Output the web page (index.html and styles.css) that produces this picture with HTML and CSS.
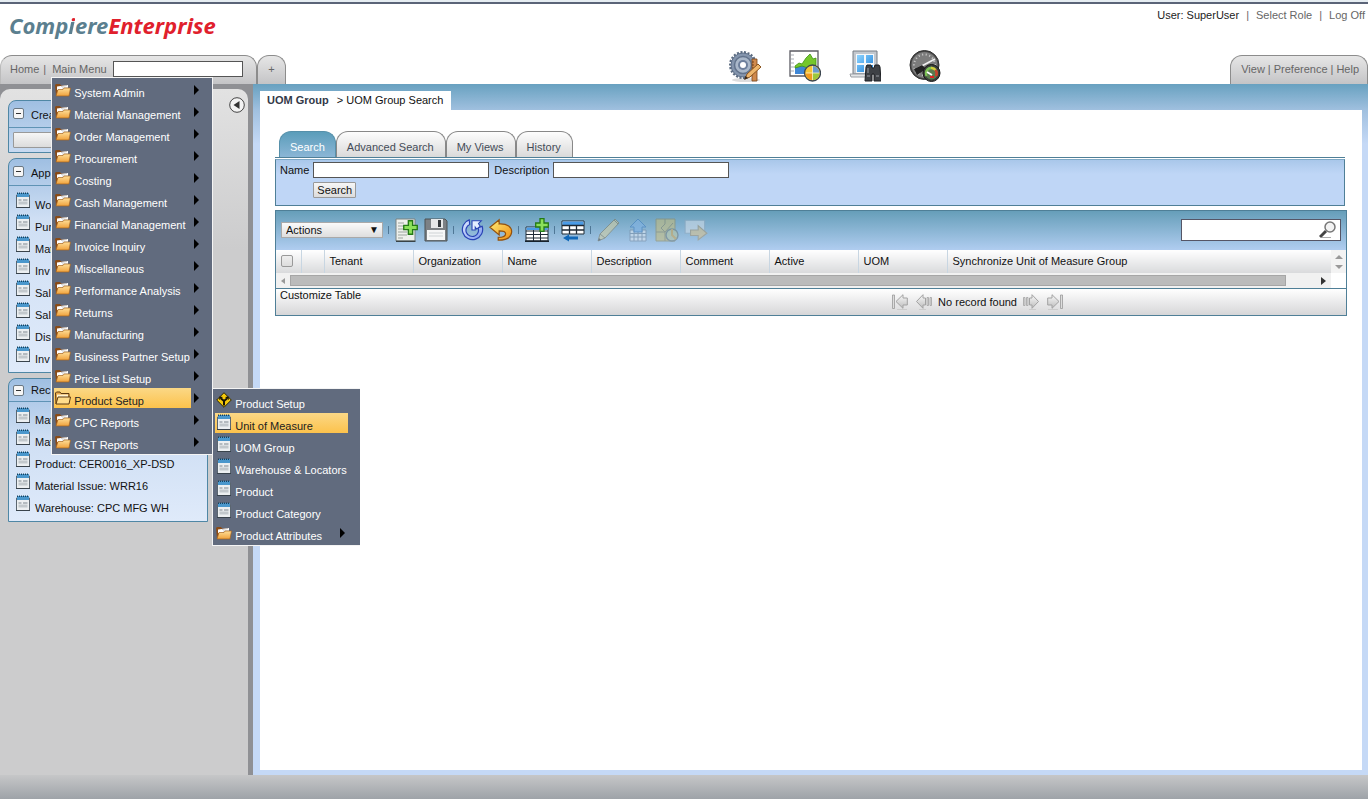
FILE: index.html
```html
<!DOCTYPE html>
<html lang="en">
<head>
<meta charset="utf-8">
<title>Compiere Enterprise - UOM Group</title>
<link rel="stylesheet" href="styles.css">
</head>
<body>
<svg class="defs" aria-hidden="true">
  <defs>
    <linearGradient id="gold" x1="0" y1="0" x2="0" y2="1"><stop offset="0" stop-color="#ffdf98"/><stop offset="1" stop-color="#f0a23c"/></linearGradient>
    <linearGradient id="amber" x1="0" y1="0" x2="1" y2="1"><stop offset="0" stop-color="#fff07a"/><stop offset="1" stop-color="#f08c10"/></linearGradient>
    <linearGradient id="blue" x1="0" y1="0" x2="1" y2="1"><stop offset="0" stop-color="#e2ecff"/><stop offset="1" stop-color="#7c98ee"/></linearGradient>
    <linearGradient id="silver" x1="0" y1="0" x2="0" y2="1"><stop offset="0" stop-color="#fafafa"/><stop offset="1" stop-color="#bcbcbc"/></linearGradient>
    <linearGradient id="pane" x1="0" y1="0" x2="1" y2="1"><stop offset="0" stop-color="#8fd4ff"/><stop offset="1" stop-color="#1d80d8"/></linearGradient>
    <symbol id="folder" viewBox="0 0 16 14">
      <path d="M1 12.500L0 2l1-1h4l1 1.500h7V6l-9 1-2 5.500z" fill="#8a4b16"/><path d="M2 6.500V3.500L13 2v5H2z" fill="#fff"/><path d="M6 3.500l6-1M7 5h6" stroke="#b5b5b5" stroke-width=".7"/>
      <path d="M1 13L3 6.500h5L9 5h6.500L14 13z" fill="url(#gold)" stroke="#a8641c" stroke-width=".7"/>
    </symbol>
    <symbol id="folder-open" viewBox="0 0 16 14">
      <path d="M1 13L.5 2l1-1H5l1 1.500h8V6" fill="#e9a94c" stroke="#5c3a12"/><path d="M2 3.500h11V7H2z" fill="#fff3cf"/><path d="M1 13L3 6h12.500L14 13z" fill="#ffdd8c" stroke="#5c3a12"/>
    </symbol>
    <symbol id="window" viewBox="0 0 14 16">
      <path d="M.5 3h13v12.500H.5z" fill="#eceff1" stroke="#5b6670"/><path d="M1 1h12v4H1z" fill="#4a97cc"/><path d="M1 1.200h12" stroke="#17425f" stroke-width="1.600" stroke-dasharray="1 1"/>
      <path d="M2.500 8h3M7 8h4.500" stroke="#7c868e"/><path d="M2.500 9.500h9v3h-9z" fill="#c2c8cc"/><path d="M0 15.500h14" stroke="#39434c"/>
    </symbol>
    <symbol id="sign" viewBox="0 0 16 16">
      <path d="M8 .7L15.300 8 8 15.300.7 8z" fill="#f5c90a" stroke="#2c2505"/><path d="M8 13.500V9L5 6.500M8 9l3-2.500" stroke="#151206" stroke-width="2" fill="none"/><path d="M3 8l.5-3.500L7 5zM13 8l-.5-3.500L9 5z" fill="#151206"/>
    </symbol>
    <symbol id="gear" viewBox="0 0 32 32">
      <ellipse cx="17" cy="30" rx="14" ry="2" fill="#ddd"/><circle cx="14" cy="15" r="12.500" fill="none" stroke="#5b6b80" stroke-width="3" stroke-dasharray="2 1.500"/><circle cx="14" cy="15" r="12" fill="#8495ad" stroke="#5f7089"/>
      <circle cx="14" cy="15" r="8.500" fill="#a9b7c9" stroke="#62738c" stroke-width="1.500"/><circle cx="14" cy="15" r="5" fill="#6d7f9c"/><circle cx="14" cy="15" r="3" fill="#fff"/>
      <path d="M23 9h5v22h-5z" fill="#d08a4d" stroke="#7a441b" stroke-width=".8"/><path d="M23 12h2M23 15h2M23 18h2M23 21h2" stroke="#5c3011" stroke-width=".8"/>
      <path d="M16 29l2-5 11-10 3 3-11 10z" fill="#eeb66c" stroke="#8a5420"/><path d="M15 30l1.500-4 2.500 2z" fill="#3a2a1c"/>
    </symbol>
    <symbol id="report" viewBox="0 0 32 32">
      <path d="M1 1h28v25H1z" fill="#fff" stroke="#5b5b63" stroke-width="1.300"/><path d="M2 5h3M2 9h3M2 13h3M2 17h3M2 21h3" stroke="#a6abb4"/>
      <path d="M6 24v-7l7-3 6 1 8-4v13z" fill="#3e86d6"/><path d="M6 16l4-3 3 1 4-6 4-4 3 5 3-1v7l-8 3-6-2-7 2z" fill="#75c72c" stroke="#3f9213" stroke-width=".8"/>
      <circle cx="23.500" cy="23" r="8" fill="#f5c536" stroke="#3c4650" stroke-width="1.300"/><path d="M23.500 23v-7a7 7 0 0 1 7 7z" fill="#6a9bce"/><path d="M23.500 23h7a7 7 0 0 1-7 7z" fill="#9cc83c"/><path d="M23.500 23v7a7 7 0 0 1-7-7z" fill="#f09a1e"/><path d="M23.500 16v14M17 23h13" stroke="#fff3c8" stroke-width=".8"/>
    </symbol>
    <symbol id="finder" viewBox="0 0 32 32">
      <path d="M4 1h24v23H4z" fill="#c3c8ce" stroke="#777d84"/><path d="M7 4h18v19H7z" fill="#f5f8fa"/><path d="M8 5h7v8H8zM17 5h7v8h-7zM8 15h7v7H8zM17 15h7v7h-7z" fill="url(#pane)"/><path d="M1 24h22l-1 3H2z" fill="#e3e5e7" stroke="#999ea4"/>
      <path d="M17 17l1-2h4l1 3h2l1-3h4l1 2 1 14h-7v-7h-2v7h-7z" fill="#3e4146" stroke="#1d1f22"/><path d="M18 26h3M27 26h3M19 18v5" stroke="#9a9ea4"/>
    </symbol>
    <symbol id="gauge" viewBox="0 0 32 32">
      <circle cx="15.500" cy="15" r="14.500" fill="#484848" stroke="#333"/><circle cx="15.500" cy="15" r="13" fill="#7c7c7c"/><circle cx="15.500" cy="15" r="10.500" fill="none" stroke="#ccc" stroke-width="2" stroke-dasharray="1 2.600"/><path d="M7 19L26 9" stroke="#f1f1f1" stroke-width="1.600"/><path d="M5 19l8-4 4 4-9 6z" fill="#222"/>
      <circle cx="22.500" cy="23" r="8.500" fill="#3a3f3a" stroke="#181818"/><circle cx="22.500" cy="23" r="6.500" fill="#5a7a4e"/><path d="M17.500 26a5.500 5.500 0 0 1 4.500-8" fill="none" stroke="#7cc455" stroke-width="2.500"/><path d="M22 18a5 5 0 0 1 4.500 2" fill="none" stroke="#d4cf3a" stroke-width="2.500"/><path d="M26.500 20a5.500 5.500 0 0 1 .5 6" fill="none" stroke="#c7422c" stroke-width="2.500"/><path d="M18 22l5 3" stroke="#fff" stroke-width="2"/><path d="M21 26h4v2h-4z" fill="#d22"/>
    </symbol>
    <symbol id="plus" viewBox="0 0 14 14"><path d="M5 .7h4V5h4.300v4H9v4.300H5V9H.7V5H5z" fill="#8be05a" stroke="#247a16" stroke-width="1.300"/></symbol>
    <symbol id="doc-new" viewBox="0 0 24 24"><path d="M1 1h19v22H1z" fill="#eef0ec" stroke="#7b8382"/><path d="M3 5h6M3 8h5M3 11h6M3 14h9M3 17h9M3 20h5" stroke="#9ca49f"/><path d="M1 23.300h19.500" stroke="#384246" stroke-width="1.400"/><use href="#plus" x="8" y="2" width="15" height="15"/></symbol>
    <symbol id="save" viewBox="0 0 24 24"><path d="M1 1h20l2 2v20H1z" fill="#7c8185" stroke="#4d5255"/><path d="M7 1h12v9H7z" fill="#e6e8e9"/><path d="M14 2h3v7h-3z" fill="#33383c"/><path d="M3 12h18v10H3z" fill="#f7f7f7"/><path d="M5 15h14M5 18h14" stroke="#cfd3d5"/></symbol>
    <symbol id="refresh" viewBox="0 0 26 24"><path d="M10 1A11 11 0 1 0 24 8l-4.500 1.500A6.800 6.800 0 1 1 10.500 6z" fill="url(#blue)" stroke="#2a44b4" stroke-width="1.300"/><path d="M13 12V2h10l-3 3 2 3-4 3-1.500-2v3z" fill="#e4edff" stroke="#2a44b4" stroke-width="1.200"/></symbol>
    <symbol id="undo" viewBox="0 0 26 24"><path d="M1 9L11 1v4.500c9-.5 14 3.500 13.500 9-.5 6-7 8.500-14.500 8.500v-3c5 0 8-1.500 8-4 0-2-2-3-7-3v4.500z" fill="url(#amber)" stroke="#93510d" stroke-width="1.300"/></symbol>
    <symbol id="grid-add" viewBox="0 0 24 24"><path d="M1 9h22v14H1z" fill="#fff" stroke="#27323d"/><path d="M1.500 9.500h21V12h-21z" fill="#4a9be6"/><path d="M1 13h22M1 16.500h22M1 20h22M8.500 12v11M15.500 12v11" stroke="#1f2a35"/><path d="M0 23.200h24" stroke="#17222d" stroke-width="1.600"/><use href="#plus" x="10" y="0" width="14" height="14"/></symbol>
    <symbol id="grid-move" viewBox="0 0 24 24"><path d="M1 3h22v13H1z" fill="#fff" stroke="#1f2a35"/><path d="M1.500 3.500h21V7h-21z" fill="#4a9be6"/><path d="M1 7.500h22M1 12h22M8.500 7v9M15.500 7v9" stroke="#1f2a35" stroke-width="1.300"/><path d="M2 20l6-3.500v2h9v3H8v2z" fill="#1168b8"/></symbol>
    <symbol id="pencil" viewBox="0 0 24 24"><path d="M1 23l2-7L18 1l4 4L8 20z" fill="#d5cfa0" stroke="#7d7a60"/><path d="M3 16l5 4M17 2l4 4" stroke="#7d7a60" fill="none"/><path d="M1 23l1-3 2 2z" fill="#444"/></symbol>
    <symbol id="upload" viewBox="0 0 20 24"><path d="M2 12h16v11H2z" fill="#e3ebf3" stroke="#7488a0"/><path d="M2 15.500h16M2 19h16M6 12v11M10 12v11M14 12v11" stroke="#7488a0"/><path d="M10 1l8 8h-4v5H6V9H2z" fill="#7fb2e6" stroke="#3c7bbd"/></symbol>
    <symbol id="archive" viewBox="0 0 24 24"><path d="M1 1h19v22H1z" fill="#c9bd78" stroke="#8e895e"/><path d="M10 1v5l-4 4 4 4v9M1 14h9l8-9" stroke="#8a8560" fill="none"/><circle cx="17" cy="17" r="6" fill="#b8c59e" stroke="#6d7b79" stroke-width="1.400"/><path d="M17 11v6l4 4" stroke="#d0a44d" stroke-width="2" fill="none"/></symbol>
    <symbol id="export" viewBox="0 0 22 20"><path d="M1 1h18v12H1z" fill="#d4dfea" stroke="#8fa6bc"/><path d="M6 10h7V6l8 7-8 6v-4H6z" fill="#dcc38c" stroke="#a49372"/></symbol>
    <symbol id="lens" viewBox="0 0 18 18"><path d="M7 10l-6 6" stroke="#444" stroke-width="3"/><circle cx="11" cy="6" r="5" fill="#f3f3f3" stroke="#777" stroke-width="1.500"/><path d="M3 16.500h9" stroke="#aaa"/></symbol>
    <symbol id="next" viewBox="0 0 16 16"><path d="M.5 3.500H2v8H.5zM3.500 3.500H5v8H3.500z" fill="#ddd" stroke="#a2a2a2" stroke-width=".8"/><path d="M6.500 4H9V.7l6.500 6.800L9 14.300V11H6.500z" fill="url(#silver)" stroke="#a2a2a2"/><path d="M6 15.500h7" stroke="#ccc"/></symbol>
    <symbol id="last" viewBox="0 0 16 16"><path d="M.7 4H5V.7l7 6.800-7 6.800V11H.7z" fill="url(#silver)" stroke="#a2a2a2"/><path d="M13.500 1h2v13.500h-2z" fill="#ddd" stroke="#999" stroke-width=".8"/><path d="M1 15.500h10" stroke="#ccc"/></symbol>
  </defs>
</svg>

<header class="header">
  <div class="brand-row">
    <div class="logo"><span class="logo-a">Comp<span class="dot">i</span>ere</span><span class="logo-b">Enterprise</span></div>
    <div class="user"><span class="who">User: SuperUser</span><span>|</span><a href="#">Select Role</a><span>|</span><a href="#">Log Off</a></div>
  </div>
  <div class="nav-row">
    <nav class="tab tab-main">
      <a href="#">Home</a><span>|</span>
      <div class="menu-anchor">
        <a href="#">Main Menu</a>
        <ul class="menu">
          <li><a href="#"><svg><use href="#folder"/></svg>System Admin</a><i></i></li>
          <li><a href="#"><svg><use href="#folder"/></svg>Material Management</a><i></i></li>
          <li><a href="#"><svg><use href="#folder"/></svg>Order Management</a><i></i></li>
          <li><a href="#"><svg><use href="#folder"/></svg>Procurement</a><i></i></li>
          <li><a href="#"><svg><use href="#folder"/></svg>Costing</a><i></i></li>
          <li><a href="#"><svg><use href="#folder"/></svg>Cash Management</a><i></i></li>
          <li><a href="#"><svg><use href="#folder"/></svg>Financial Management</a><i></i></li>
          <li><a href="#"><svg><use href="#folder"/></svg>Invoice Inquiry</a><i></i></li>
          <li><a href="#"><svg><use href="#folder"/></svg>Miscellaneous</a><i></i></li>
          <li><a href="#"><svg><use href="#folder"/></svg>Performance Analysis</a><i></i></li>
          <li><a href="#"><svg><use href="#folder"/></svg>Returns</a><i></i></li>
          <li><a href="#"><svg><use href="#folder"/></svg>Manufacturing</a><i></i></li>
          <li><a href="#"><svg><use href="#folder"/></svg>Business Partner Setup</a><i></i></li>
          <li><a href="#"><svg><use href="#folder"/></svg>Price List Setup</a><i></i></li>
          <li><a class="active" href="#"><svg><use href="#folder-open"/></svg>Product Setup</a><i></i>
            <ul class="menu submenu">
              <li><a href="#"><svg class="tall"><use href="#sign"/></svg>Product Setup</a></li>
              <li><a class="active" href="#"><svg class="tall"><use href="#window"/></svg>Unit of Measure</a></li>
              <li><a href="#"><svg class="tall"><use href="#window"/></svg>UOM Group</a></li>
              <li><a href="#"><svg class="tall"><use href="#window"/></svg>Warehouse &amp; Locators</a></li>
              <li><a href="#"><svg class="tall"><use href="#window"/></svg>Product</a></li>
              <li><a href="#"><svg class="tall"><use href="#window"/></svg>Product Category</a></li>
              <li><a href="#"><svg><use href="#folder"/></svg>Product Attributes</a><i></i></li>
            </ul>
          </li>
          <li><a href="#"><svg><use href="#folder"/></svg>CPC Reports</a><i></i></li>
          <li><a href="#"><svg><use href="#folder"/></svg>GST Reports</a><i></i></li>
        </ul>
      </div>
      <input class="field menu-search" type="text" aria-label="Menu search">
    </nav>
    <button class="tab tab-add" type="button">+</button>
    <div class="shortcuts">
      <a href="#" aria-label="Setup"><svg><use href="#gear"/></svg></a>
      <a href="#" aria-label="Reports"><svg><use href="#report"/></svg></a>
      <a href="#" aria-label="Find windows"><svg><use href="#finder"/></svg></a>
      <a href="#" aria-label="Dashboard"><svg><use href="#gauge"/></svg></a>
    </div>
    <nav class="tab tab-right"><a href="#">View</a><span>|</span><a href="#">Preference</a><span>|</span><a href="#">Help</a></nav>
  </div>
</header>

<div class="body">
  <aside class="side-frame">
    <div class="side">
      <div class="panels">
        <section class="panel">
          <h2><button class="toggle" type="button" aria-label="Collapse"></button>Crea</h2>
          <div class="create"><button class="btn create-btn" type="button" aria-label="Create"></button></div>
        </section>
        <section class="panel apps">
          <h2><button class="toggle" type="button" aria-label="Collapse"></button>App</h2>
          <ul class="links">
            <li><a href="#"><svg><use href="#window"/></svg>Wo</a></li>
            <li><a href="#"><svg><use href="#window"/></svg>Pur</a></li>
            <li><a href="#"><svg><use href="#window"/></svg>Mat</a></li>
            <li><a href="#"><svg><use href="#window"/></svg>Inv</a></li>
            <li><a href="#"><svg><use href="#window"/></svg>Sal</a></li>
            <li><a href="#"><svg><use href="#window"/></svg>Sal</a></li>
            <li><a href="#"><svg><use href="#window"/></svg>Dis</a></li>
            <li><a href="#"><svg><use href="#window"/></svg>Inv</a></li>
          </ul>
        </section>
        <section class="panel recent">
          <h2><button class="toggle" type="button" aria-label="Collapse"></button>Rec</h2>
          <ul class="links">
            <li><a href="#"><svg><use href="#window"/></svg>Mat</a></li>
            <li><a href="#"><svg><use href="#window"/></svg>Mat</a></li>
            <li><a href="#"><svg><use href="#window"/></svg>Product: CER0016_XP-DSD</a></li>
            <li><a href="#"><svg><use href="#window"/></svg>Material Issue: WRR16</a></li>
            <li><a href="#"><svg><use href="#window"/></svg>Warehouse: CPC MFG WH</a></li>
          </ul>
        </section>
      </div>
      <button class="collapse" type="button" aria-label="Hide sidebar"><svg viewBox="0 0 16 16"><circle cx="8" cy="8" r="7.300" fill="#f3f3f3" stroke="#444"/><path d="M10.500 4v8L4.500 8z" fill="#333"/></svg></button>
    </div>
  </aside>

  <main class="main">
    <div class="crumbs"><b>UOM Group</b><span>&gt; UOM Group Search</span></div>
    <div class="content">
      <div class="tabs" role="tablist">
        <button class="selected" role="tab" type="button">Search</button>
        <button role="tab" type="button">Advanced Search</button>
        <button role="tab" type="button">My Views</button>
        <button role="tab" type="button">History</button>
      </div>
      <form class="search-form">
        <label for="name">Name</label><input class="field" id="name" type="text">
        <label for="desc">Description</label><input class="field" id="desc" type="text">
        <button class="btn search-btn" type="button">Search</button>
      </form>
      <section class="grid">
        <div class="toolbar">
          <div class="select"><select aria-label="Actions"><option>Actions</option></select></div>
          <span class="sep"></span>
          <button type="button" aria-label="New"><svg><use href="#doc-new"/></svg></button>
          <button type="button" aria-label="Save"><svg><use href="#save"/></svg></button>
          <span class="sep"></span>
          <button type="button" aria-label="Refresh"><svg><use href="#refresh"/></svg></button>
          <button type="button" aria-label="Undo"><svg><use href="#undo"/></svg></button>
          <span class="sep"></span>
          <button type="button" aria-label="Add row"><svg><use href="#grid-add"/></svg></button>
          <span class="sep"></span>
          <button type="button" aria-label="Toggle grid"><svg><use href="#grid-move"/></svg></button>
          <span class="sep"></span>
          <button class="off" type="button" aria-label="Edit"><svg><use href="#pencil"/></svg></button>
          <button class="off" type="button" aria-label="Upload"><svg><use href="#upload"/></svg></button>
          <button class="off" type="button" aria-label="Archive"><svg><use href="#archive"/></svg></button>
          <button class="off" type="button" aria-label="Export"><svg><use href="#export"/></svg></button>
          <div class="find"><input type="text" aria-label="Find"><svg><use href="#lens"/></svg></div>
        </div>
        <div class="table-area">
          <div class="table-left">
            <table>
              <colgroup><col class="c-check"><col class="c-icon"><col class="c-std"><col class="c-std"><col class="c-std"><col class="c-std"><col class="c-std"><col class="c-std"><col class="c-std"><col></colgroup>
              <thead><tr><th><input type="checkbox" aria-label="Select all"></th><th></th><th>Tenant</th><th>Organization</th><th>Name</th><th>Description</th><th>Comment</th><th>Active</th><th>UOM</th><th>Synchronize Unit of Measure Group</th></tr></thead>
            </table>
            <div class="hscroll"><span class="arrow-left"></span><span class="thumb"></span><span class="arrow-right"></span></div>
          </div>
          <div class="vscroll"><span class="arrow-up"></span><span class="arrow-down"></span></div>
        </div>
        <div class="grid-foot">
          <a href="#">Customize Table</a>
          <div class="pager">
            <button type="button" aria-label="First"><svg class="flip"><use href="#last"/></svg></button>
            <button type="button" aria-label="Previous"><svg class="flip"><use href="#next"/></svg></button>
            <span>No record found</span>
            <button type="button" aria-label="Next"><svg><use href="#next"/></svg></button>
            <button type="button" aria-label="Last"><svg><use href="#last"/></svg></button>
          </div>
        </div>
      </section>
    </div>
  </main>
</div>
<footer class="footer"></footer>
</body>
</html>
```
FILE: styles.css
```css
* { box-sizing: border-box; }
body {
  margin: 0;
  min-height: 100vh;
  display: flex;
  flex-direction: column;
  font: 11px/14px "Liberation Sans", Arial, sans-serif;
  color: #111;
  background: #fff;
}
a { color: inherit; text-decoration: none; }
ul { list-style: none; margin: 0; padding: 0; }
button, input, select { font: inherit; color: inherit; margin: 0; padding: 0; border: 0; background: none; }
svg { display: block; flex: none; }
.defs { position: absolute; width: 0; height: 0; }

.header { border-top: 2px solid #e6edf2; }
.brand-row {
  display: flex;
  justify-content: space-between;
  height: 48px;
  border-top: 2px solid #5b6478;
}
.logo {
  padding: 6px 0 0 9px;
  font: italic 700 22px/30px "Noto Sans", "Open Sans", sans-serif;
}
.logo-a { color: #5b7f8f; }
.logo-b { color: #e0202c; }
.dot {
  background: linear-gradient(#e0202c 11px, #5b7f8f 11px);
  background-clip: text;
  -webkit-background-clip: text;
  color: transparent;
}
.user { display: flex; gap: 7px; padding: 4px 3px 0 0; color: #666; }
.user .who { color: #222; }

.nav-row { display: flex; align-items: flex-end; height: 34px; }
.tab {
  display: flex;
  align-items: center;
  height: 29px;
  padding-bottom: 2px;
  border: 1px solid #8c8c8c;
  border-bottom: 0;
  border-radius: 12px 12px 0 0;
  background: linear-gradient(#e6e6e6, #c4c4c6);
  color: #666;
}
.tab-main { width: 257px; padding-left: 9px; gap: 4px; border-left-color: #bbb; }
.tab-add { width: 29px; justify-content: center; }
.tab-right { padding: 0 8px 2px 10px; gap: 3px; }
.shortcuts { flex: 1; display: flex; gap: 28px; padding-left: 443px; padding-bottom: 2px; }
.shortcuts svg { width: 32px; height: 32px; }
.field { height: 16px; border: 1px solid #555; background: #fff; padding: 0 2px; }
.menu-search { width: 130px; margin-left: 2px; }
.menu-anchor { position: relative; padding-left: 2px; }

.menu {
  position: absolute;
  z-index: 5;
  left: 1px;
  top: 15px;
  width: 162px;
  padding: 2px 2px 0;
  border: 1px solid #f4f4f4;
  background: #616b7e;
  color: #fff;
}
.menu li { position: relative; display: flex; height: 22px; }
.menu a {
  display: flex;
  align-items: flex-start;
  gap: 3px;
  width: 137px;
  height: 20px;
  padding-left: 1px;
  white-space: nowrap;
  line-height: 26px;
}
.menu svg { width: 16px; height: 14px; margin-top: 3px; }
.menu svg.tall { height: 16px; margin-top: 1px; }
.menu a.active { background: linear-gradient(#fbd886, #fcc24c); color: #222; }
.menu i, .arrow-left, .arrow-right { width: 0; height: 0; border: 5px solid transparent; }
.menu i { margin: 5px 0 0 3px; border-left-color: #000; border-right-width: 0; }
.menu .submenu { left: 158px; top: 0; width: 148px; border-right: 0; padding-bottom: 0; }
.submenu a { width: 133px; gap: 3px; }
.submenu i { margin-left: -8px; }

.body { flex: 1; display: flex; }
.side-frame {
  display: flex;
  width: 253px;
  flex: none;
  padding: 5px 5px 0 0;
  background: #8f9094;
}
.side {
  flex: 1;
  display: flex;
  align-items: flex-start;
  justify-content: space-between;
  padding: 8px 3px 0 8px;
  border-radius: 10px 10px 0 0;
  background: linear-gradient(#e2e2e2, #cccccd 160px);
}
.panels { width: 200px; display: flex; flex-direction: column; gap: 5px; padding-top: 3px; }
.panel {
  border: 1px solid #4f87a5;
  border-radius: 8px 0 0 0;
  background: linear-gradient(#9fbfe2, #cfdff4 60px, #dfeafa);
}
.panel h2 {
  display: flex;
  align-items: center;
  gap: 7px;
  height: 27px;
  margin: 0;
  padding: 2px 0 0 4px;
  border-bottom: 1px solid #5f93b5;
  font: inherit;
}
.recent h2 { height: 23px; padding-top: 0; }
.toggle {
  width: 11px;
  height: 11px;
  margin-bottom: 4px;
  border: 1px solid #6b7883;
  border-radius: 2px;
  background: linear-gradient(#333, #333) center / 5px 1px no-repeat #f6f6f6;
}
.recent .toggle { margin-bottom: 0; }
.create { padding: 4px; height: 24px; }
.btn { border: 1px solid #999; border-radius: 1px; background: linear-gradient(#f6f6f6, #dcdcdc); height: 16px; color: #111; }
.create-btn { width: 120px; }
.links { padding: 4px 0 5px 7px; }
.links li { height: 22px; }
.apps .links { padding-top: 5px; }
.links a { display: flex; align-items: flex-start; gap: 5px; line-height: 28px; height: 22px; white-space: nowrap; }
.links svg { width: 14px; height: 16px; margin-top: 1px; }
.collapse svg { width: 16px; height: 16px; }

.main {
  flex: 1;
  min-width: 0;
  display: flex;
  flex-direction: column;
  align-items: flex-start;
  padding: 7px 6px 5px 7px;
  background: linear-gradient(#68a1c0, #a0c0df 26px, #c5d9f6 60px);
}
.crumbs { display: flex; gap: 8px; height: 19px; padding: 2px 8px 0 7px; background: #fff; }
.crumbs b { color: #333948; }
.content { flex: 1; align-self: stretch; padding: 21px 15px 0; background: #fff; }
.tabs { display: flex; padding-left: 4px; margin: 0 2px 1px 0; border-bottom: 1px solid #4f7f97; }
.tabs button {
  height: 26px;
  padding: 4px 10px 0;
  border: 1px solid #888;
  border-bottom: 0;
  border-radius: 12px 12px 0 0;
  background: linear-gradient(#fdfdfd, #dadada);
  color: #444c58;
}
.tabs button + button { padding-right: 11px; }
.tabs .selected { background: linear-gradient(#5b9dba, #8bb6d6); border-color: #5690aa; color: #fff; }
.search-form {
  display: grid;
  grid-template-columns: auto 176px auto 176px;
  grid-auto-rows: 16px;
  justify-content: start;
  align-content: start;
  align-items: center;
  gap: 4px;
  height: 47px;
  margin-right: 2px;
  padding: 2px 4px 0;
  border: 1px solid #4f7f97;
  border-top-color: #7fa9c6;
  background: linear-gradient(#a9c7ea, #bfd6f6 14px);
}
.search-form .field { width: 176px; }
.search-form label:nth-of-type(2) { margin-left: 1px; }
.search-btn { grid-column: 2; justify-self: start; padding: 0 3px; line-height: 14px; }

.grid { margin-top: 4px; border: 1px solid #4f7f97; }
.toolbar {
  display: flex;
  align-items: center;
  gap: 5px;
  height: 39px;
  padding: 0 5px 1px;
  background: linear-gradient(#669eb9, #b0cdf0);
}
.toolbar svg { width: 24px; height: 24px; }
.select { position: relative; width: 102px; }
.select select { appearance: none; display: block; width: 100%; height: 16px; padding: 0 4px; border: 1px solid #a9a9a9; background: linear-gradient(#fafafa, #dedede); line-height: 14px; }
.select::after { content: "▼"; position: absolute; right: 4px; top: 1px; font-size: 10px; line-height: 14px; pointer-events: none; }
.sep { width: 1px; height: 8px; margin-right: 1px; background: #4f7796; }
.toolbar .off { opacity: .55; }
.find { display: flex; align-items: center; width: 160px; height: 22px; margin-left: auto; padding-right: 3px; border: 1px solid #556; background: #fff; }
.find input { flex: 1; min-width: 0; height: 18px; }
.find svg { width: 18px; height: 18px; }

.table-area { display: flex; }
.table-left { flex: 1; min-width: 0; }
table { width: 100%; table-layout: fixed; border-collapse: collapse; }
.c-check { width: 25px; }
.c-icon { width: 23px; }
.c-std { width: 89px; }
th {
  height: 23px;
  padding: 0 0 1px 5px;
  border-right: 1px solid #c8d6e2;
  background: linear-gradient(#fff, #d9dadc);
  font-weight: normal;
  text-align: left;
  white-space: nowrap;
}
th:last-child { border-right: 0; }
th input { appearance: none; display: block; width: 12px; height: 12px; border: 1px solid #999; border-radius: 2px; background: linear-gradient(#eee, #ddd); }
.hscroll { display: flex; align-items: center; height: 15px; padding-right: 5px; background: #f1f1f1; }
.arrow-left { border-width: 3px 4px; border-left-width: 0; border-right-color: #999; margin: 0 5px; }
.thumb { width: 996px; flex: 0 1 996px; height: 11px; border: 1px solid #a6a6a6; background: #bbb; }
.arrow-right { border-width: 4px 5px; border-right-width: 0; border-left-color: #333; margin-left: auto; }
.vscroll { display: flex; flex-direction: column; align-items: center; gap: 6px; width: 15px; height: 23px; padding-top: 5px; background: #f3f3f3; }
.arrow-up, .arrow-down { width: 0; height: 0; border: 4px solid transparent; }
.arrow-up { border-top: 0; border-bottom-color: #999; }
.arrow-down { border-bottom: 0; border-top-color: #999; }

.grid-foot { display: flex; justify-content: space-between; height: 27px; padding: 0 283px 0 4px; border-top: 1px solid #4f7f97; background: linear-gradient(#fff, #d6d6d8); line-height: 13px; }
.pager { display: flex; align-items: center; gap: 8px; }
.pager span { margin: 0 -2px; }
.pager svg { width: 16px; height: 16px; }
.pager .flip { transform: scaleX(-1); }

.footer { height: 24px; background: linear-gradient(#c6c7c8, #9ea3a8); }
```
